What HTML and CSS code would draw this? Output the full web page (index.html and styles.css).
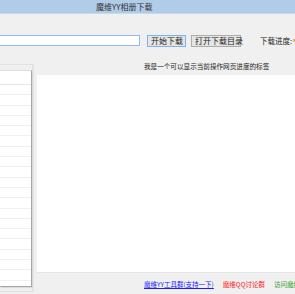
FILE: index.html
```html
<!DOCTYPE html>
<html lang="zh">
<head>
    <meta charset="UTF-8">
    <title>魔维YY相册下载</title>
    <link rel="stylesheet" href="styles.css">
</head>
<body>
<div class="titlebar">魔维YY相册下载</div>

<div class="toolbar">
    <input class="url" type="text">
    <button class="btn btn-focus">开始下载</button>
    <button class="btn">打开下载目录</button>
    <span class="progress-label">下载进度:</span>
    <span class="progress-dot"></span>
</div>

<div class="main">
    <div class="left-panel">
        <div class="list">
            <div class="row"></div><div class="row"></div><div class="row"></div>
            <div class="row"></div><div class="row"></div><div class="row"></div>
            <div class="row"></div><div class="row"></div><div class="row"></div>
            <div class="row"></div><div class="row"></div><div class="row"></div>
            <div class="row"></div><div class="row"></div><div class="row"></div>
            <div class="row"></div><div class="row"></div><div class="row"></div>
            <div class="row"></div><div class="row"></div><div class="row"></div>
        </div>
    </div>
    <div class="right-panel">
        <div class="status">我是一个可以显示当前操作网页进度的标签</div>
        <div class="view"></div>
        <div class="links">
            <a class="link blue" href="#">魔维YY工具群(支持一下)</a>
            <a class="link red" href="#">魔维QQ讨论群</a>
            <a class="link green" href="#">访问魔维网</a>
        </div>
    </div>
</div>
</body>
</html>
```

FILE: styles.css
```css
body {
    margin: 0;
    width: 295px;
    height: 294px;
    overflow: hidden;
    background-color: #f0f0f0;
    font-family: "Noto Sans CJK SC", "Liberation Sans", sans-serif;
    font-size: 8px;
    color: #222;
}
.titlebar {
    height: 13px;
    line-height: 13px;
    background-color: #b1cce9;
    border-bottom: 1px solid #c9d9ea;
    padding-left: 96px;
    color: #333;
    font-size: 8px;
}
.toolbar {
    display: flex;
    align-items: center;
    height: 13px;
    margin-top: 20px;
    white-space: nowrap;
}
.url {
    width: 142px;
    height: 11px;
    box-sizing: border-box;
    margin: 0 0 0 -2px;
    padding: 0;
    border: 1px solid #8ebbe8;
    background: #fff;
}
.btn {
    height: 12px;
    box-sizing: border-box;
    padding: 0 3px;
    border: 1px solid #acacac;
    background: #e5e5e5;
    font-family: inherit;
    font-size: 8px;
    line-height: 10px;
    color: #222;
}
.btn-focus {
    margin-left: 7px;
    width: 39px;
    border-color: #7eb4ea;
}
.btn + .btn {
    margin-left: 5px;
    width: 50px;
}
.progress-label {
    margin-left: 19px;
    font-size: 7.5px;
}
.progress-dot {
    width: 2px;
    height: 3px;
    margin-left: 1px;
    background: #f5b060;
}
.main {
    display: flex;
    margin-top: 9px;
}
.left-panel {
    width: 39px;
    height: 228px;
    box-sizing: border-box;
    margin-top: 8px;
    border-top: 1px solid #e2e2e2;
    border-right: 2px solid #e4e4e4;
    border-bottom: 1px solid #e2e2e2;
    padding-top: 5px;
}
.list {
    width: 32px;
    height: 217px;
    box-sizing: border-box;
    background: #fff;
    border: 1px solid #a8a8a8;
    border-top-color: #dcdcdc;
    border-left: none;
    box-shadow: 1px 1px 0 #dadada;
    overflow: hidden;
}
.row {
    height: 9.3px;
    border-bottom: 1px solid #f0f0f0;
}
.row:first-child {
    height: 13px;
    border-bottom-color: #e6e6e6;
}
.right-panel {
    flex: 1;
    margin-left: 3px;
}
.status {
    height: 19px;
    line-height: 21px;
    padding-left: 107px;
    font-size: 6.6px;
    color: #222;
}
.view {
    height: 197px;
    background: #fff;
    border-bottom: 1px solid #e6e6e6;
}
.links {
    display: flex;
    padding: 6px 0 0 107px;
    white-space: nowrap;
    font-size: 6.5px;
}
.link {
    margin-right: 9px;
}
.blue {
    color: #1a1aff;
}
.red {
    color: #ff1a1a;
    text-decoration: none;
}
.green {
    color: #2a9a2a;
    text-decoration: none;
}
```
